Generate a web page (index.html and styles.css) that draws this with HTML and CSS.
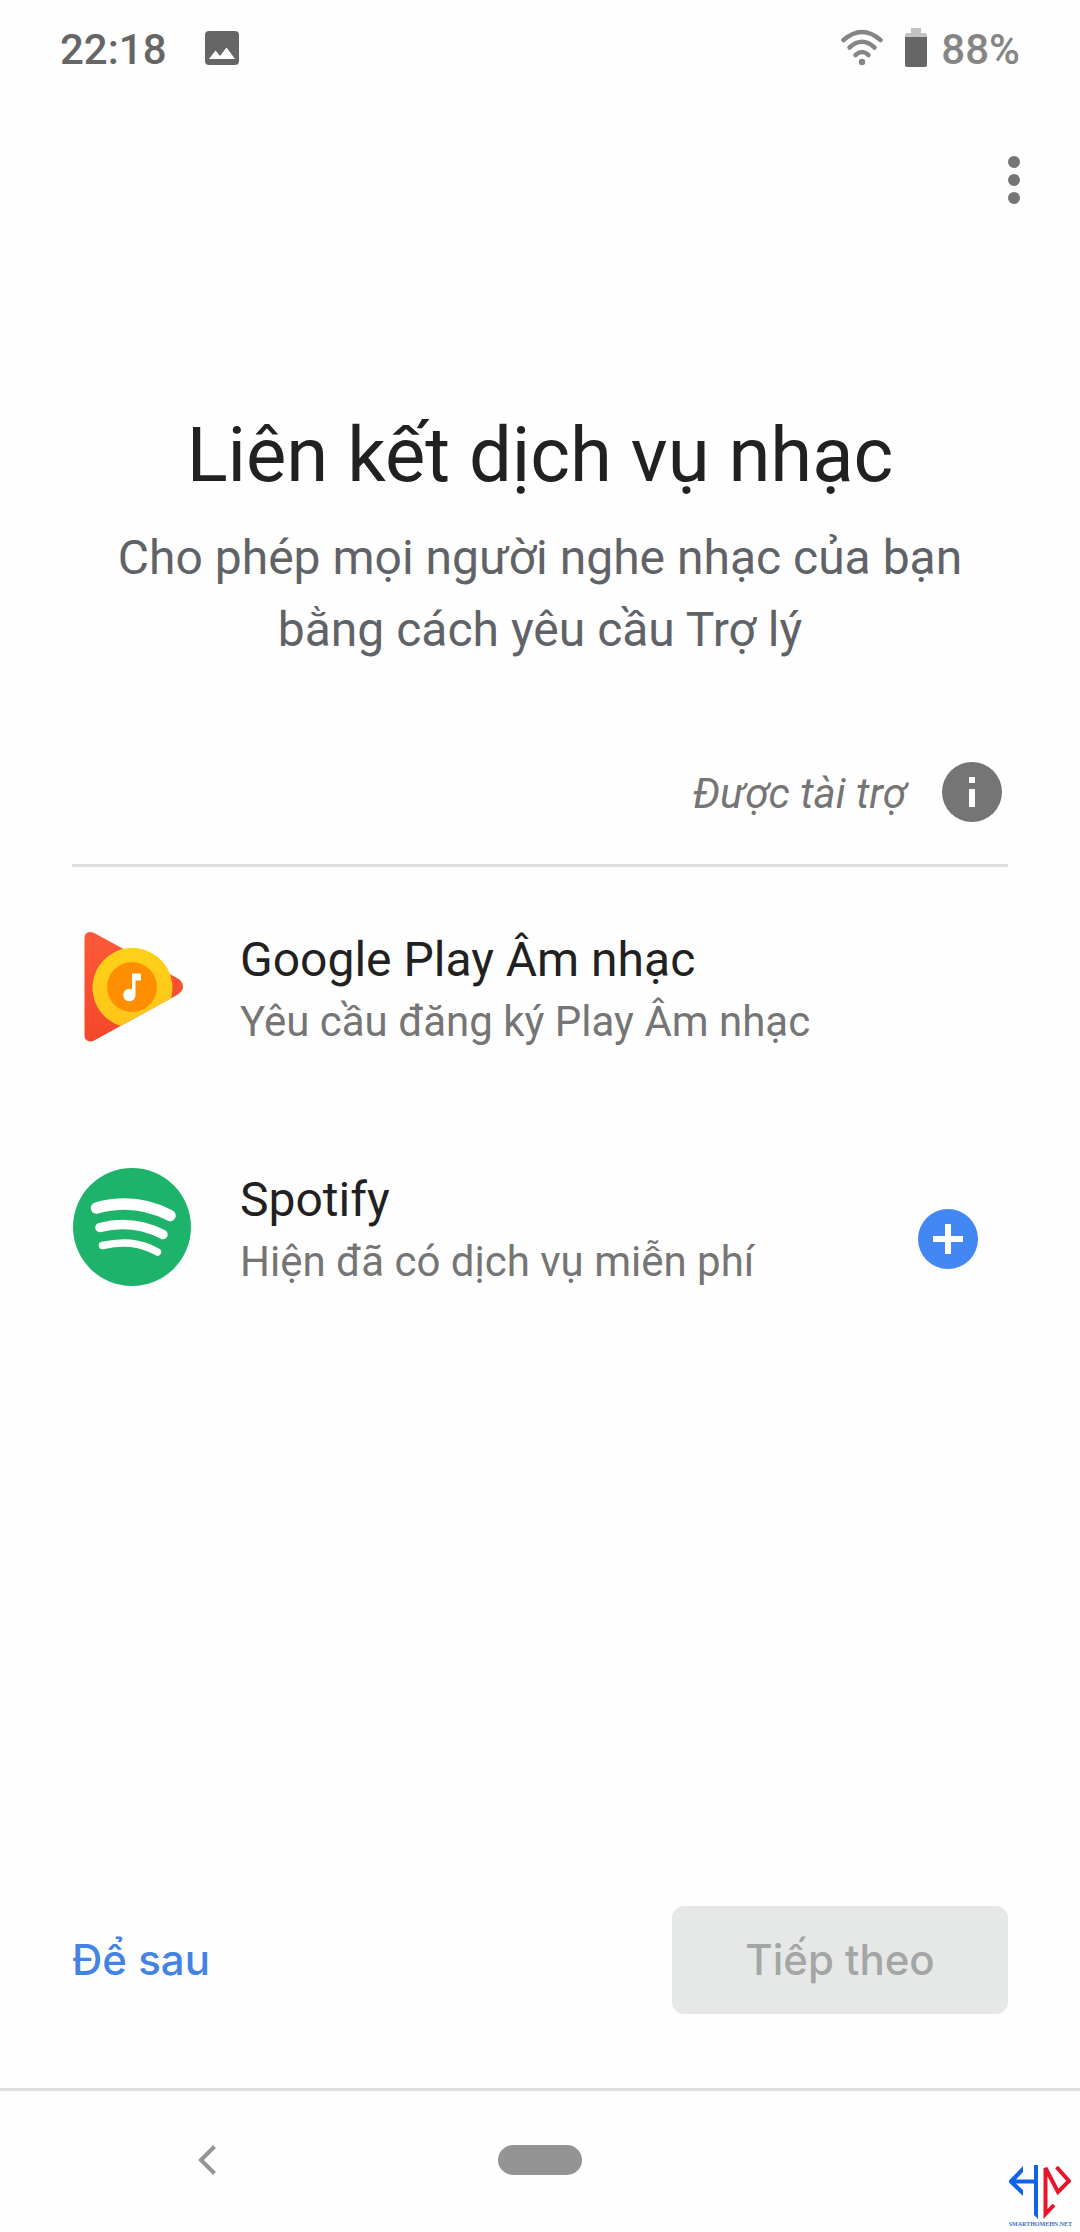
FILE: index.html
```html
<!DOCTYPE html>
<html lang="vi">
<head>
<meta charset="utf-8">
<meta name="viewport" content="width=device-width, initial-scale=1">
<title>Liên kết dịch vụ nhạc</title>
<link rel="stylesheet" href="styles.css">
</head>
<body>
<div class="screen">
  <header class="status">
    <span class="clock">22:18</span>
    <svg class="status-photo" viewBox="0 0 34 34" width="34" height="34" aria-hidden="true"><rect width="34" height="34" rx="4" fill="#666"/><path d="M4 28 10.500 19.500 15 25 21.500 16.500 30 28Z" fill="#fff"/></svg>
    <svg class="status-wifi" viewBox="0 0 42 38" width="42" height="38" aria-hidden="true"><g fill="none" stroke="#858585" stroke-width="4.500" stroke-linecap="round"><path d="M2.500 11Q21-5 39.500 11"/><path d="M8.500 18.500Q21 7 33.500 18.500"/><path d="M14.500 26Q21 20 27.500 26"/></g><circle cx="21" cy="33" r="3.200" fill="#858585"/></svg>
    <svg class="status-battery" viewBox="0 0 22 40" width="22" height="40" aria-hidden="true"><path d="M6 0h10v5h4a2 2 0 0 1 2 2v3H0V7a2 2 0 0 1 2-2h4Z" fill="#c2c2c2"/><path d="M0 9h22v28a2 2 0 0 1-2 2H2a2 2 0 0 1-2-2Z" fill="#666"/></svg>
    <span class="charge">88%</span>
  </header>

  <div class="toolbar">
    <button class="icon-button" type="button" aria-label="Tùy chọn khác">
      <svg viewBox="0 0 12 48" width="12" height="48" aria-hidden="true"><g fill="#757575"><circle cx="6" cy="6" r="6"/><circle cx="6" cy="24" r="6"/><circle cx="6" cy="42" r="6"/></g></svg>
    </button>
  </div>

  <main class="content">
    <h1 class="title">Liên kết dịch vụ nhạc</h1>
    <p class="subtitle">Cho phép mọi người nghe nhạc của bạn bằng cách yêu cầu Trợ lý</p>

    <div class="sponsored">
      <em>Được tài trợ</em>
      <button class="icon-button" type="button" aria-label="Thông tin">
        <svg viewBox="0 0 60 60" width="60" height="60" aria-hidden="true"><circle cx="30" cy="30" r="30" fill="#757575"/><path d="M27 15h6v6h-6zM27 27h6v18h-6z" fill="#fff"/></svg>
      </button>
    </div>

    <ul class="services">
      <li class="service">
        <svg class="service-logo" viewBox="0 0 120 120" width="120" height="120" aria-hidden="true">
          <defs>
            <linearGradient id="red" x1="0" y1="0" x2="0" y2="1"><stop offset="0" stop-color="#fb5a38"/><stop offset="1" stop-color="#f4462a"/></linearGradient>
            <linearGradient id="yellow" x1="0" y1="0" x2="0" y2="1"><stop offset="0" stop-color="#ffd117"/><stop offset="1" stop-color="#ffc51b"/></linearGradient>
          </defs>
          <path d="M12.500 11Q12.500 6 17 5Q20 4.500 24 7L105 51Q111 54.500 111 59.500Q111 64.500 105 68L24 112.500Q19 116 15 113.500Q12.500 112 12.500 108Z" fill="url(#red)"/>
          <path d="M48.500 99A40 40 0 1 1 99 71.500Z" fill="url(#yellow)"/>
          <circle cx="60" cy="60" r="25" fill="#ff8f00"/>
          <path d="M60 46.500H69V53.500H63.500V67.500A6.200 6.200 0 1 1 60 62.500Z" fill="#fff"/>
        </svg>
        <div class="service-text">
          <h2 class="service-name">Google Play Âm nhạc</h2>
          <p class="service-note">Yêu cầu đăng ký Play Âm nhạc</p>
        </div>
      </li>
      <li class="service">
        <svg class="service-logo" viewBox="0 0 120 120" width="120" height="120" aria-hidden="true">
          <circle cx="60" cy="60" r="59" fill="#1eb36b"/>
          <g fill="none" stroke="#fff" stroke-linecap="round"><path d="M24.500 41C50 34 76 37 98 48.500" stroke-width="11.500"/><path d="M28 60.500C51 54.500 71 57.500 91 67.500" stroke-width="9.500"/><path d="M30.500 78.500C51 74 67 75 85.500 85" stroke-width="7.500"/></g>
        </svg>
        <div class="service-text">
          <h2 class="service-name">Spotify</h2>
          <p class="service-note">Hiện đã có dịch vụ miễn phí</p>
        </div>
        <button class="icon-button add" type="button" aria-label="Thêm Spotify">
          <svg viewBox="0 0 60 60" width="60" height="60" aria-hidden="true"><circle cx="30" cy="30" r="30" fill="#4387f3"/><path d="M27 15h6v12h12v6H33v12h-6V33H15v-6h12z" fill="#fff"/></svg>
        </button>
      </li>
    </ul>
  </main>

  <footer class="actions">
    <button class="action later" type="button">Để sau</button>
    <button class="action next" type="button" disabled>Tiếp theo</button>
  </footer>

  <nav class="system-nav">
    <button class="icon-button" type="button" aria-label="Quay lại">
      <svg viewBox="0 0 18 30" width="18" height="30" aria-hidden="true"><path d="M16.500 1.500 3 15 16.500 28.500" fill="none" stroke="#949494" stroke-width="4"/></svg>
    </button>
    <button class="home-pill" type="button" aria-label="Màn hình chính"></button>
  </nav>

  <div class="watermark">
    <svg viewBox="0 0 62 55" width="62" height="55" aria-hidden="true"><path d="M14 1V7L7 14.500H25V0H29V54L25 50V18.500H7L14 25V31L0 17.500V15.500Z" fill="#1262e8"/><path d="M47.500 2 60 16 49 27 36.500 3V49L45 40" fill="none" stroke="#e8152b" stroke-width="4"/></svg>
    <span>SMARTHOMEHN.NET</span>
  </div>
</div>
</body>
</html>
```
FILE: styles.css
```css
* {
  box-sizing: border-box;
}

body {
  margin: 0;
  background: #fefefe;
  color: #212121;
  font-family: Roboto, "Noto Sans", sans-serif;
}

h1, h2, p, ul {
  margin: 0;
  padding: 0;
  font-weight: 400;
}

button {
  margin: 0;
  padding: 0;
  border: 0;
  background: none;
  font: inherit;
}

svg {
  display: block;
}

.screen {
  position: relative;
  display: flex;
  flex-direction: column;
  min-height: 100vh;
}

.status {
  display: flex;
  align-items: center;
  height: 96px;
  padding: 0 60px;
  font-size: 42px;
  font-weight: 500;
}

.clock,
.charge {
  padding-top: 2px;
}

.clock {
  color: #666;
}

.status-photo {
  margin-left: 38px;
}

.status-wifi {
  margin-left: auto;
}

.status-battery {
  margin: 0 14px 0 22px;
}

.charge {
  color: #858585;
}

.toolbar {
  display: flex;
  justify-content: flex-end;
  padding: 60px 60px 0;
}

.content {
  flex: 1;
  padding: 206px 72px 0;
}

.title {
  font-size: 76px;
  line-height: 90px;
  text-align: center;
}

.subtitle {
  margin-top: 22px;
  padding: 0 36px;
  color: #5f6368;
  font-size: 48px;
  line-height: 72px;
  text-align: center;
}

.sponsored {
  display: flex;
  align-items: center;
  justify-content: flex-end;
  gap: 36px;
  height: 147px;
  margin-top: 54px;
  padding-right: 6px;
  border-bottom: 3px solid #dedede;
  color: #757575;
  font-size: 42px;
}

.sponsored em {
  padding-top: 2px;
}

.services {
  list-style: none;
}

.service {
  display: flex;
  align-items: center;
  gap: 48px;
  height: 240px;
  padding-right: 30px;
}

.service-text {
  flex: 1;
  padding-top: 8px;
}

.service-name {
  font-size: 48px;
  line-height: 60px;
}

.service-note {
  margin-top: 2px;
  color: #757575;
  font-size: 42px;
  line-height: 60px;
}

.add {
  padding-top: 24px;
}

.actions {
  display: flex;
  align-items: center;
  justify-content: space-between;
  padding: 0 72px 74px;
}

.action {
  height: 108px;
  padding-bottom: 2px;
  font-family: Inter, Roboto, sans-serif;
  font-size: 42px;
  font-weight: 500;
}

.later {
  color: #4483e4;
}

.next {
  min-width: 336px;
  border-radius: 12px;
  background: #e6e8e7;
  color: #a4a6a5;
}

.system-nav {
  display: grid;
  grid-template-columns: 1fr auto 1fr;
  align-items: center;
  height: 144px;
  padding: 0 198px 4px;
  border-top: 3px solid #dedede;
}

.system-nav .icon-button {
  justify-self: start;
}

.home-pill {
  width: 84px;
  height: 30px;
  border-radius: 15px;
  background: #949494;
}

.watermark {
  position: absolute;
  right: 8px;
  bottom: 4px;
  display: flex;
  flex-direction: column;
  align-items: center;
  color: #3a6fc4;
  font-family: "Liberation Serif", serif;
  font-size: 6px;
  font-weight: 700;
  line-height: 8px;
}
```
